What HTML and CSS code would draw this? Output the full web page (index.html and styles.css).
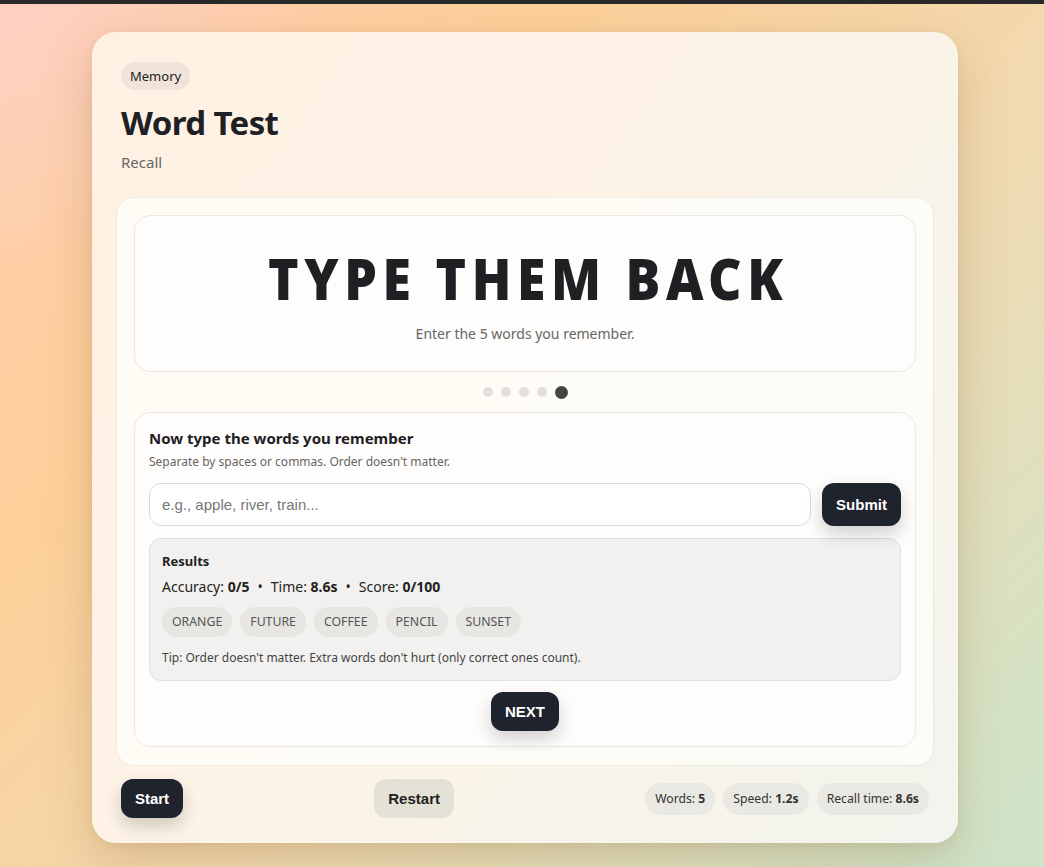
FILE: index.html
```html
<!DOCTYPE html>
<html lang="en">
<head>
<meta charset="utf-8">
<title>Word Test</title>
<link rel="stylesheet" href="styles.css">
</head>
<body>
<div class="topbar"></div>
<main class="page">
  <section class="card">
    <header class="card-head">
      <span class="badge">Memory</span>
      <h1 class="title">Word Test</h1>
      <p class="subtitle">Recall</p>
    </header>

    <div class="panel">
      <div class="hero">
        <h2 class="hero-title"><span class="hero-text">TYPE THEM BACK</span></h2>
        <p class="hero-sub">Enter the 5 words you remember.</p>
      </div>

      <div class="dots">
        <span class="dot"></span>
        <span class="dot"></span>
        <span class="dot"></span>
        <span class="dot"></span>
        <span class="dot active"></span>
      </div>

      <div class="form-card">
        <h3 class="form-title">Now type the words you remember</h3>
        <p class="form-hint">Separate by spaces or commas. Order doesn't matter.</p>
        <div class="input-row">
          <input class="word-input" type="text" placeholder="e.g., apple, river, train...">
          <button class="btn btn-dark btn-submit">Submit</button>
        </div>
        <div class="results">
          <div class="results-title">Results</div>
          <div class="results-line">Accuracy: <b>0/5</b><span class="sep">•</span>Time: <b>8.6s</b><span class="sep">•</span>Score: <b>0/100</b></div>
          <div class="chips">
            <span class="chip">ORANGE</span>
            <span class="chip">FUTURE</span>
            <span class="chip">COFFEE</span>
            <span class="chip">PENCIL</span>
            <span class="chip">SUNSET</span>
          </div>
          <div class="tip">Tip: Order doesn't matter. Extra words don't hurt (only correct ones count).</div>
        </div>
        <div class="next-row">
          <button class="btn btn-dark btn-next">NEXT</button>
        </div>
      </div>
    </div>

    <footer class="card-foot">
      <button class="btn btn-dark btn-start">Start</button>
      <button class="btn btn-light btn-restart">Restart</button>
      <div class="stats">
        <span class="stat">Words: <b>5</b></span>
        <span class="stat">Speed: <b>1.2s</b></span>
        <span class="stat">Recall time: <b>8.6s</b></span>
      </div>
    </footer>
  </section>
</main>
</body>
</html>
```

FILE: styles.css
```css
* { box-sizing: border-box; }

html, body {
  margin: 0;
  padding: 0;
  height: 100%;
}

body {
  font-family: "Noto Sans", "Open Sans", sans-serif;
  color: #222;
  background:
    radial-gradient(ellipse 500px 400px at 0% 0%, rgba(255, 208, 196, 0.9), rgba(255, 208, 196, 0) 70%),
    linear-gradient(135deg, #ffcfae 0%, #fdd09a 30%, #f1dab0 60%, #d3e3c6 92%, #cfe3c9 100%);
  overflow: hidden;
}

.topbar {
  height: 4px;
  background: #2a2a2a;
}

.page {
  padding: 28px 86px 0 92px;
}

.card {
  width: 866px;
  height: 811px;
  border-radius: 24px;
  background: linear-gradient(125deg, #fef1e4 0%, #fdf3e6 45%, #f7f4ea 75%, #f3f4ee 100%);
  box-shadow: 0 18px 50px rgba(120, 80, 30, 0.22), 0 2px 8px rgba(120, 80, 30, 0.08);
  padding: 30px 24px 24px 24px;
  display: flex;
  flex-direction: column;
}

.card-head {
  padding: 0 5px;
}

.badge {
  display: inline-block;
  height: 28px;
  line-height: 28px;
  padding: 0 9px;
  border-radius: 14px;
  background: #efe3da;
  font-size: 13px;
  color: #222;
}

.title {
  margin: 12px 0 0 0;
  font-size: 33px;
  line-height: 42px;
  font-weight: 700;
  color: #1f2024;
  letter-spacing: -0.6px;
}

.subtitle {
  margin: 8px 0 0 0;
  font-size: 15px;
  line-height: 20px;
  color: #666;
}

.panel {
  margin-top: 25px;
  border-radius: 18px;
  background: rgba(255, 255, 252, 0.7);
  border: 1px solid #f0ebe2;
  padding: 17px 17px 18px 17px;
}

.hero {
  height: 157px;
  border: 1px solid #ece9e3;
  border-radius: 16px;
  background: #fefdfb;
  text-align: center;
  padding-top: 30px;
}

.hero-title {
  margin: 0;
  font-family: "Noto Sans", sans-serif;
  font-weight: 900;
  font-size: 56px;
  line-height: 64px;
  letter-spacing: 6px;
  color: #1f2024;
  white-space: nowrap;
}

.hero-text {
  display: inline-block;
  transform: scaleX(0.925);
  transform-origin: center;
  margin-right: -6px;
}

.hero-sub {
  margin: 14px 0 0 0;
  font-size: 14px;
  color: #666;
}

.dots {
  display: flex;
  justify-content: center;
  align-items: center;
  gap: 8px;
  height: 40px;
}

.dot {
  width: 10px;
  height: 10px;
  border-radius: 50%;
  background: #e2dfda;
}

.dot.active {
  width: 13px;
  height: 13px;
  background: #444;
}

.form-card {
  border: 1px solid #ece9e3;
  border-radius: 16px;
  background: #fefdfb;
  padding: 15px 14px 15px 14px;
}

.form-title {
  margin: 0;
  font-size: 15px;
  line-height: 20px;
  font-weight: 700;
  color: #1f2024;
}

.form-hint {
  margin: 6px 0 0 0;
  font-size: 12px;
  line-height: 16px;
  color: #666;
}

.input-row {
  display: flex;
  gap: 11px;
  margin-top: 13px;
}

.word-input {
  flex: 1;
  height: 43px;
  border: 1px solid #dedbd6;
  border-radius: 12px;
  background: #fff;
  padding: 0 12px;
  font-family: "Liberation Sans", Arial, sans-serif;
  font-size: 15px;
  color: #222;
  outline: none;
}

.word-input::placeholder {
  color: #777;
}

.btn {
  border: none;
  font-family: "Liberation Sans", Arial, sans-serif;
  font-weight: 700;
  font-size: 15px;
  border-radius: 12px;
  cursor: pointer;
}

.btn-dark {
  background: #1f232d;
  color: #fff;
  box-shadow: 0 8px 18px rgba(0, 0, 0, 0.18);
}

.btn-light {
  background: #e4e1d6;
  color: #222;
}

.btn-submit {
  height: 43px;
  width: 79px;
}

.results {
  margin-top: 12px;
  border: 1px solid #e2e0dc;
  border-radius: 12px;
  background: #f2f1ef;
  padding: 13px 12px 14px 12px;
}

.results-title {
  font-size: 13px;
  line-height: 18px;
  font-weight: 700;
  color: #222;
}

.results-line {
  margin-top: 8px;
  font-size: 14px;
  line-height: 18px;
  color: #222;
}

.results-line b { font-weight: 700; }

.sep {
  margin: 0 8px;
}

.chips {
  display: flex;
  gap: 8px;
  margin-top: 11px;
}

.chip {
  height: 30px;
  line-height: 30px;
  padding: 0 10px;
  border-radius: 15px;
  background: #e7e6e3;
  font-size: 12.3px;
  color: #555;
}

.tip {
  margin-top: 13px;
  font-size: 12px;
  line-height: 16px;
  color: #444;
}

.next-row {
  display: flex;
  justify-content: center;
  margin-top: 11px;
}

.btn-next {
  height: 39px;
  width: 68px;
}

.card-foot {
  margin-top: auto;
  padding: 0 5px 1px 5px;
  display: flex;
  justify-content: space-between;
  align-items: center;
}

.btn-start {
  height: 39px;
  width: 62px;
}

.btn-restart {
  height: 39px;
  width: 80px;
}

.stats {
  display: flex;
  gap: 8px;
}

.stat {
  height: 32px;
  line-height: 32px;
  padding: 0 10px;
  border-radius: 16px;
  background: #e9e8e2;
  font-size: 12.2px;
  color: #333;
}
```
